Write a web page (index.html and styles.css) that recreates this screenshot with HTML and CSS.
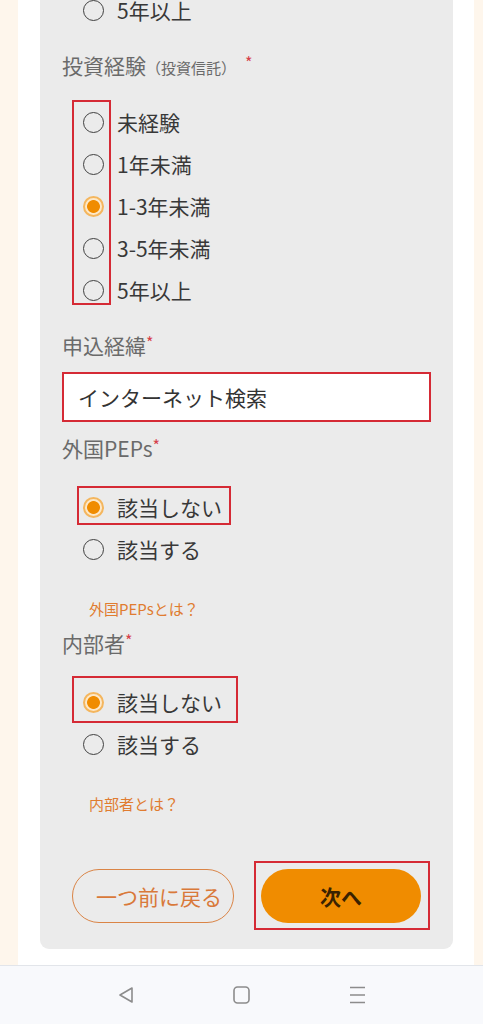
FILE: index.html
```html
<!DOCTYPE html>
<html lang="ja">
<head>
    <meta charset="UTF-8">
    <meta name="viewport" content="width=device-width, initial-scale=1.0">
    <title>お客様情報の入力</title>
    <link rel="stylesheet" href="styles.css">
</head>
<body>
    <div class="screen">
        <form class="card">
            <div class="options options-prev">
                <label class="option"><span class="radio"></span>5年以上</label>
            </div>

            <p class="field-label">投資経験<small>（投資信託）</small><span class="req req-spaced">*</span></p>
            <div class="options options-first marked-column">
                <label class="option"><span class="radio"></span>未経験</label>
                <label class="option"><span class="radio"></span>1年未満</label>
                <label class="option"><span class="radio checked"></span>1-3年未満</label>
                <label class="option"><span class="radio"></span>3-5年未満</label>
                <label class="option"><span class="radio"></span>5年以上</label>
            </div>

            <p class="field-label">申込経緯<span class="req">*</span></p>
            <input class="text-input" type="text" value="インターネット検索">

            <p class="field-label">外国PEPs<span class="req">*</span></p>
            <div class="options">
                <label class="option marked marked-pep"><span class="radio checked"></span>該当しない</label>
                <label class="option"><span class="radio"></span>該当する</label>
            </div>
            <a class="help-link" href="#">外国PEPsとは？</a>

            <p class="field-label label-after-link">内部者<span class="req">*</span></p>
            <div class="options">
                <label class="option marked marked-insider"><span class="radio checked"></span>該当しない</label>
                <label class="option"><span class="radio"></span>該当する</label>
            </div>
            <a class="help-link" href="#">内部者とは？</a>

            <div class="actions">
                <button type="button" class="button back-button">一つ前に戻る</button>
                <button type="submit" class="button next-button">次へ</button>
            </div>
        </form>
    </div>

    <nav class="system-nav">
        <svg width="16" height="18" viewBox="0 0 16 18"><path d="M14 2 L2 9 L14 16 Z" fill="none" stroke="#8c8c8c" stroke-width="1.6" stroke-linejoin="round"/></svg>
        <svg width="17" height="18" viewBox="0 0 17 18"><rect x="1" y="1" width="15" height="16" rx="3.5" fill="none" stroke="#8c8c8c" stroke-width="1.6"/></svg>
        <svg width="17" height="18" viewBox="0 0 17 18"><path d="M1 1.5 H16 M1 9 H16 M1 16.5 H16" stroke="#8c8c8c" stroke-width="1.6"/></svg>
    </nav>
</body>
</html>
```

FILE: styles.css
```css
body {
    margin: 0;
    background-color: #fef6ec;
    font-family: "Noto Sans CJK JP", "Noto Sans", sans-serif;
}

.screen {
    height: 965px;
    overflow: hidden;
    margin: 0 9px 0 18px;
    padding: 0 21px 0 22px;
    background-color: #fff;
}

.card {
    margin-top: -11px;
    padding: 0 22px 26px;
    background-color: #ebebeb;
    border-radius: 0 0 9px 9px;
}

.field-label {
    box-sizing: border-box;
    margin: 0;
    height: 30px;
    padding-bottom: 6px;
    line-height: 24px;
    font-size: 21px;
    color: #6a6a6a;
}

.field-label small {
    font-size: 15px;
}

.req {
    font-size: 16px;
    color: #d6404a;
    vertical-align: 5px;
}

.req-spaced {
    margin-left: 9px;
}

.options {
    position: relative;
    margin: 23px 0 0 21px;
}

.options-prev {
    margin-top: 0;
    margin-bottom: 19px;
}

.options-first {
    margin-top: 21px;
    margin-bottom: 19px;
}

.option {
    position: relative;
    display: flex;
    align-items: center;
    gap: 13px;
    width: fit-content;
    height: 42px;
    font-size: 21px;
    line-height: 38px;
    color: #383838;
}

.radio {
    box-sizing: border-box;
    flex-shrink: 0;
    width: 21px;
    height: 21px;
    margin-top: 1px;
    border: 1.6px solid #404040;
    border-radius: 50%;
}

.radio.checked {
    border: 2px solid #f4b65e;
    background: radial-gradient(circle, #f08c00 0 6px, #fde8c8 6.8px);
}

/* red boxes from the annotation */
.marked-column::after,
.marked::after,
.next-button::after {
    content: "";
    position: absolute;
    border: 2px solid #d52a35;
}

.marked-column::after {
    left: -11px;
    top: -1px;
    width: 35px;
    bottom: 6px;
}

.marked-pep::after {
    left: -6px;
    right: -9px;
    top: 0;
    bottom: 3px;
}

.marked-insider::after {
    left: -11px;
    right: -16px;
    top: -5px;
    bottom: 0;
}

.text-input {
    display: block;
    box-sizing: border-box;
    width: 100%;
    height: 50px;
    margin: 12px 0 11px;
    padding: 0 14px;
    border: 2px solid #d52a35;
    background-color: #fff;
    font-family: inherit;
    font-size: 21px;
    color: #333;
}

.help-link {
    display: block;
    margin: 29px 0 0 27px;
    height: 22px;
    line-height: 20px;
    font-size: 15px;
    color: #e07c30;
    text-decoration: none;
}

.label-after-link {
    margin-top: 7px;
}

.actions {
    display: flex;
    gap: 27px;
    margin-top: 53px;
    padding: 0 10px;
}

.button {
    flex: 1;
    height: 54px;
    padding: 0;
    border-radius: 27px;
    font-family: inherit;
    font-size: 21px;
    cursor: pointer;
}

.back-button {
    text-indent: 12px;
    border: 1.6px solid #da8446;
    background: transparent;
    color: #d9793a;
}

.next-button {
    position: relative;
    border: none;
    background-color: #f08c00;
    color: #3a2200;
    font-weight: 700;
}

.next-button::after {
    inset: -8px -9px -7px -7px;
}

.system-nav {
    display: flex;
    justify-content: center;
    align-items: center;
    gap: 99px;
    height: 58px;
    border-top: 1px solid #e2e5ea;
    background-color: #f8f9fc;
}
```
